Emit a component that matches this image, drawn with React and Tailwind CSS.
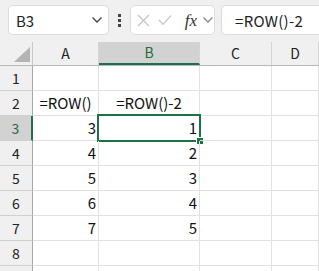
import React from "react";

const font = { fontFamily: '"Noto Sans CJK JP", "Noto Sans", sans-serif' };

function Chevron({ className = "", color = "#444" }) {
  return (
    <svg width="12" height="8" viewBox="0 0 12 8" className={className}>
      <path d="M1.5 1.5 L6 6 L10.5 1.5" fill="none" stroke={color} strokeWidth="1.3" />
    </svg>
  );
}

const cols = [
  { key: "A", w: "w-[66px]" },
  { key: "B", w: "w-[101px]" },
  { key: "C", w: "w-[72px]" },
  { key: "D", w: "flex-1" },
];

const data = {
  2: { A: { t: "=ROW()", a: "center" }, B: { t: "=ROW()-2", a: "center" } },
  3: { A: { t: "3" }, B: { t: "1" } },
  4: { A: { t: "4" }, B: { t: "2" } },
  5: { A: { t: "5" }, B: { t: "3" } },
  6: { A: { t: "6" }, B: { t: "4" } },
  7: { A: { t: "7" }, B: { t: "5" } },
};

export default function App() {
  const rows = [1, 2, 3, 4, 5, 6, 7, 8, 9];
  return (
    <div className="w-[319px] h-[271px] overflow-hidden bg-white" style={font}>
      {/* formula bar */}
      <div className="h-[42px] bg-[#f0f0f0] flex items-start pt-[5px] pl-[8px]">
        <div className="w-[101px] h-[30px] bg-white border border-[#dcdcdc] rounded-[5px] flex items-center justify-between pl-[7px] pr-[5px]">
          <span className="text-[15px] text-[#222] leading-none">B3</span>
          <Chevron />
        </div>
        <div className="w-[21px] h-[30px] flex flex-col items-center justify-center gap-[2px]">
          <div className="w-[3px] h-[3px] bg-[#444]" />
          <div className="w-[3px] h-[3px] bg-[#444]" />
          <div className="w-[3px] h-[3px] bg-[#444]" />
        </div>
        <div className="w-[85px] h-[30px] bg-white border border-[#dcdcdc] rounded-[5px] flex items-center pl-[6px]">
          <svg width="13" height="13" viewBox="0 0 13 13">
            <path d="M1 1 L12 12 M12 1 L1 12" stroke="#c4c4c4" strokeWidth="1.2" fill="none" />
          </svg>
          <svg width="14" height="12" viewBox="0 0 14 12" className="ml-[8px]">
            <path d="M1 6 L5 10.5 L13 1.5" stroke="#c4c4c4" strokeWidth="1.2" fill="none" />
          </svg>
          <span
            className="ml-[13px] text-[17px] italic text-[#333] leading-none"
            style={{ fontFamily: '"Liberation Serif", serif' }}
          >
            fx
          </span>
          <Chevron className="ml-[5px]" color="#888" />
        </div>
        <div className="ml-[6px] flex-1 h-[30px] bg-white border border-[#dcdcdc] rounded-l-[5px] border-r-0 flex items-center pl-[13px]">
          <span className="text-[15px] text-[#222] leading-none tracking-[0.3px]">=ROW()-2</span>
        </div>
      </div>

      {/* column header */}
      <div className="flex h-[24px] bg-[#f0f0f0] border-b border-[#b8b8b8]">
        <div className="w-[33px] border-r border-[#c8c8c8] relative">
          <svg width="17" height="15" viewBox="0 0 17 15" className="absolute left-[14px] top-[5px]">
            <path d="M16 0 L16 15 L0 15 Z" fill="#b4b4b4" />
          </svg>
        </div>
        {cols.map((c) => (
          <div
            key={c.key}
            className={`${c.w} flex items-center justify-center text-[14px] border-r border-[#d4d4d4] ${
              c.key === "B" ? "bg-[#d2d2d2] text-[#1e6b3c] border-b-2 border-b-[#1e7145]" : "text-[#222]"
            }`}
          >
            {c.key}
          </div>
        ))}
      </div>

      {rows.map((r) => (
        <div key={r} className="flex h-[25px]">
          <div
            className={`w-[33px] shrink-0 flex items-center justify-center text-[14px] border-b border-[#d0d0d0] ${
              r === 3
                ? "bg-[#d2d2d2] text-[#1e6b3c] border-r-2 border-r-[#1e7145]"
                : "bg-[#f0f0f0] text-[#222] border-r border-r-[#a8a8a8]"
            }`}
          >
            {r < 9 ? r : ""}
          </div>
          {cols.map((c) => {
            const cell = data[r] && data[r][c.key];
            const sel = r === 3 && c.key === "B";
            return (
              <div
                key={c.key}
                className={`${c.w} relative flex items-center border-r border-b border-[#e1e1e1] text-[15px] text-[#111] ${
                  cell && cell.a === "center" ? "justify-center" : "justify-end pr-[2px]"
                }`}
              >
                {cell ? cell.t : ""}
                {sel && (
                  <>
                    <div className="absolute left-[-2px] top-[-2px] right-[-2px] bottom-[-2px] border-2 border-[#1e7145]" />
                    <div className="absolute right-[-4px] bottom-[-4px] w-[6px] h-[6px] bg-[#1e7145] outline outline-1 outline-white" />
                  </>
                )}
              </div>
            );
          })}
        </div>
      ))}
    </div>
  );
}
